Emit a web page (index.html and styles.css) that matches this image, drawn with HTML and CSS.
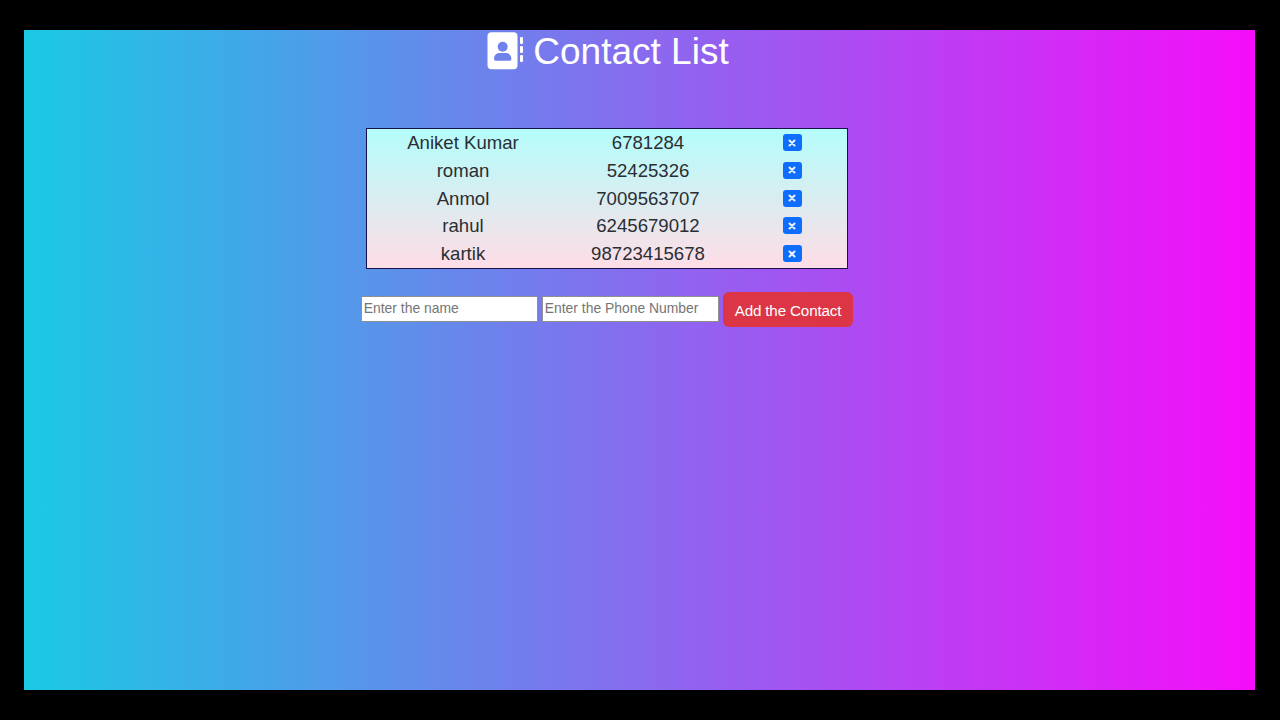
FILE: index.html
```html
<!DOCTYPE html>
<html lang="en">
<head>
    <meta charset="UTF-8" />
    <title>Contact List</title>
    <link rel="stylesheet" href="styles.css">
</head>
<body>
    <div class="app">
        <h1 class="title">
            <svg class="title-icon" viewBox="0 0 36 38" aria-hidden="true">
                <rect x="0.500" y="0.300" width="30" height="37" rx="4" fill="#fff" />
                <circle cx="15.700" cy="14.700" r="5" fill="#6f82ec" />
                <path d="M7 27c0-3.700 2.500-6 5.500-6h6.400c3 0 5.500 2.300 5.500 6 0 1-.7 1.700-1.600 1.700H8.600C7.700 28.700 7 28 7 27z" fill="#6f82ec" />
                <rect x="33" y="5" width="3" height="7" rx="1" fill="#fff" />
                <rect x="33" y="14" width="3" height="7" rx="1" fill="#fff" />
                <rect x="33" y="23" width="3" height="7" rx="1" fill="#fff" />
            </svg>
            <span class="title-text">Contact List</span>
        </h1>

        <div class="contact-table">
            <div class="contact-row">
                <span>Aniket Kumar</span>
                <span>6781284</span>
                <span><button class="delete-btn"><svg viewBox="0 0 8 8"><path d="M1.500 1.500l5 5M6.500 1.500l-5 5" /></svg></button></span>
            </div>
            <div class="contact-row">
                <span>roman</span>
                <span>52425326</span>
                <span><button class="delete-btn"><svg viewBox="0 0 8 8"><path d="M1.500 1.500l5 5M6.500 1.500l-5 5" /></svg></button></span>
            </div>
            <div class="contact-row">
                <span>Anmol</span>
                <span>7009563707</span>
                <span><button class="delete-btn"><svg viewBox="0 0 8 8"><path d="M1.500 1.500l5 5M6.500 1.500l-5 5" /></svg></button></span>
            </div>
            <div class="contact-row">
                <span>rahul</span>
                <span>6245679012</span>
                <span><button class="delete-btn"><svg viewBox="0 0 8 8"><path d="M1.500 1.500l5 5M6.500 1.500l-5 5" /></svg></button></span>
            </div>
            <div class="contact-row">
                <span>kartik</span>
                <span>98723415678</span>
                <span><button class="delete-btn"><svg viewBox="0 0 8 8"><path d="M1.500 1.500l5 5M6.500 1.500l-5 5" /></svg></button></span>
            </div>
        </div>

        <div class="add-form">
            <input type="text" placeholder="Enter the name">
            <input type="text" placeholder="Enter the Phone Number">
            <button class="add-btn">Add the Contact</button>
        </div>
    </div>
</body>
</html>
```

FILE: styles.css
```css
* {
    box-sizing: border-box;
}

html, body {
    height: 100%;
}

body {
    font-family: "Liberation Sans", Arial, sans-serif;
    margin: 0;
    padding: 29.5px 25px 30px 24px;
    background: #000;
    color: #2a2e33;
}

.app {
    height: 660px;
    background: linear-gradient(to right, #1ac9e4, #f50df9);
    display: flex;
    flex-direction: column;
    align-items: center;
    padding-right: 65px;
}

.title {
    display: flex;
    align-items: center;
    gap: 10px;
    margin: 2.500px 0 0 2px;
    height: 38px;
    color: #fff;
    font-size: 37px;
    font-weight: 400;
    line-height: 38px;
}

.title-text {
    padding-top: 2px;
}

.title-icon {
    width: 36px;
    height: 38px;
}

.contact-table {
    width: 482px;
    margin: 58px 0 0 0;
    padding-top: 0.2px;
    border: 1px solid #17124a;
    background: linear-gradient(to bottom, #b4fdfb, #ffdde6);
}

.contact-row {
    display: grid;
    grid-template-columns: 192px 178px 110px;
    height: 27.75px;
    align-items: center;
    text-align: center;
    font-size: 18.6px;
}

.contact-row span {
    display: flex;
    justify-content: center;
    align-items: center;
}

.delete-btn {
    width: 19px;
    height: 17px;
    margin-top: -1px;
    padding: 0;
    border: 0;
    border-radius: 3px;
    background: #0d6efd;
    display: flex;
    justify-content: center;
    align-items: center;
}

.delete-btn svg {
    width: 8px;
    height: 8px;
    fill: none;
    stroke: #e8f0ff;
    stroke-width: 2;
    stroke-linecap: round;
}

.add-form {
    display: flex;
    align-items: flex-start;
    gap: 4px;
    margin: 23px 0 0 0;
}

.add-form input {
    width: 177px;
    height: 26px;
    margin-top: 4px;
    padding: 0 2px 2px;
    border: 1px solid #8f8f8f;
    font-family: "Liberation Sans", Arial, sans-serif;
    font-size: 13.9px;
}

.add-form input::placeholder {
    color: #757575;
}

.add-btn {
    width: 130.5px;
    height: 35px;
    padding: 2px 0 0;
    border: 0;
    border-radius: 6px;
    background: #dc3545;
    color: #fff;
    font-family: "Liberation Sans", Arial, sans-serif;
    font-size: 15.2px;
    letter-spacing: -0.15px;
}
```
